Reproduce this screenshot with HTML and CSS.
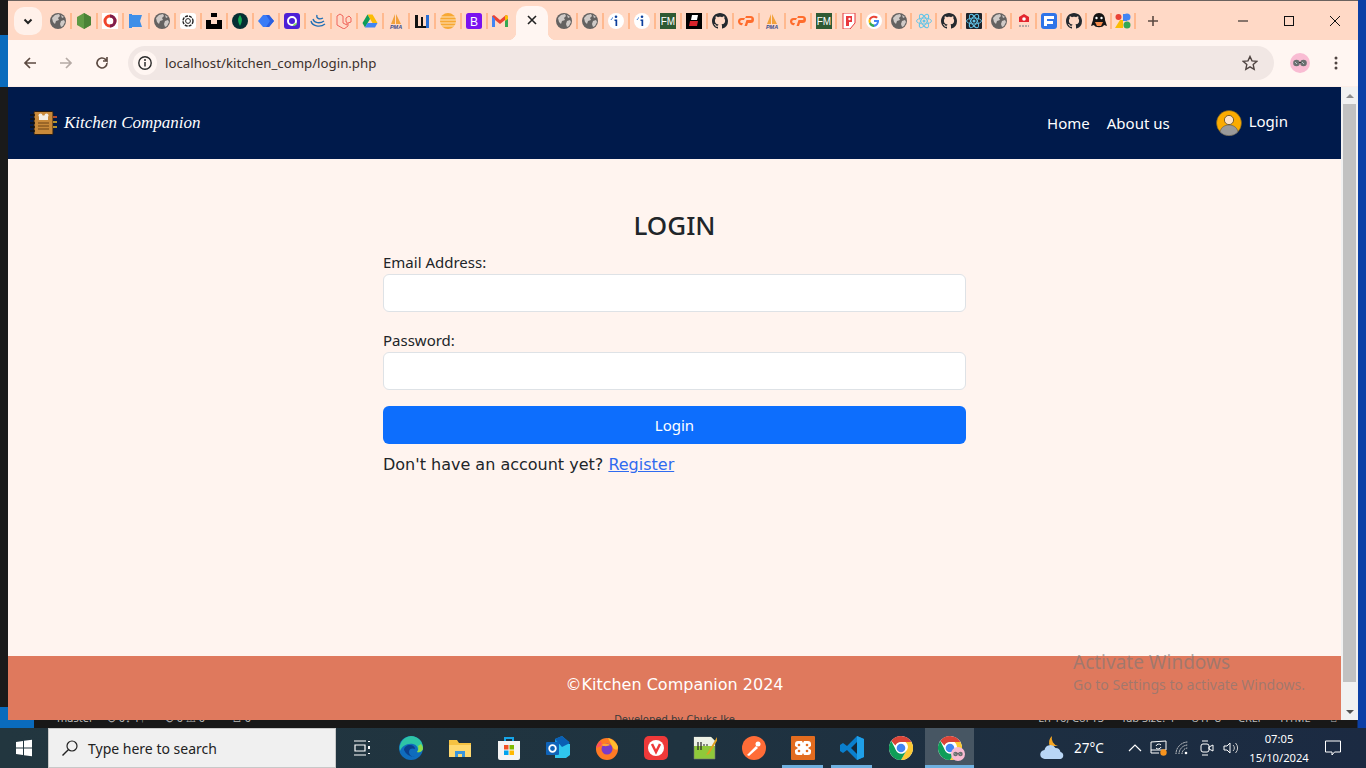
FILE: index.html
```html
<!DOCTYPE html>
<html lang="en">
<head>
<meta charset="utf-8">
<title>Kitchen Companion - Login</title>
<link rel="stylesheet" href="styles.css">
</head>
<body>
<svg class="defs" width="0" height="0" aria-hidden="true">
  <symbol id="globe" viewBox="0 0 16 16"><circle cx="8" cy="8" r="8" fill="#646261"/><path d="M2 5l3-3 4-1 1 2-2 2 1 2-3 1-1 3-2-2zM11 8l3-1 1 2-2 4-2 1-1-3zM11 2l3 2-2 1z" fill="#cfcac7"/></symbol>
  <symbol id="node" viewBox="0 0 16 16"><path d="M8 0l7 4v8l-7 4-7-4V4z" fill="#5f9a44"/><path d="M8 0l7 4v8l-7 4z" fill="#4a8336"/></symbol>
  <symbol id="ring" viewBox="0 0 16 16"><rect width="16" height="16" fill="#fff"/><circle cx="8" cy="8" r="5" fill="none" stroke="#f0452c" stroke-width="3"/><path d="M8 3a5 5 0 0 1 0 10" fill="none" stroke="#7d1e4e" stroke-width="3"/></symbol>
  <symbol id="flag" viewBox="0 0 16 16"><path d="M1 1h3v1h10l-2 6 2 6H4v1H1z" fill="#3f8fe8"/></symbol>
  <symbol id="gpt" viewBox="0 0 16 16"><rect width="16" height="16" rx="3" fill="#fff"/><circle cx="8" cy="8" r="5" fill="none" stroke="#222" stroke-width="1.4" stroke-dasharray="3 1"/><circle cx="8" cy="8" r="2.4" fill="none" stroke="#222"/></symbol>
  <symbol id="unsplash" viewBox="0 0 16 16"><path d="M5 0h6v4H5zM0 7h5v4h6V7h5v9H0z" fill="#000"/></symbol>
  <symbol id="mongo" viewBox="0 0 16 16"><circle cx="8" cy="8" r="8" fill="#052e33"/><path d="M8 2c2 3 3 5 0 11-3-6-2-8 0-11z" fill="#13aa52"/></symbol>
  <symbol id="diamond" viewBox="0 0 16 16"><path d="M5 2h6l5 6-5 6H5L0 8z" fill="#3a7cf7"/><path d="M8 2h3l5 6-5 6H8l4-6z" fill="#2a5fe0"/></symbol>
  <symbol id="purple" viewBox="0 0 16 16"><rect width="16" height="16" rx="3" fill="#4d1fd6"/><circle cx="8" cy="8" r="4" fill="none" stroke="#fff" stroke-width="2"/><path d="M9 13c0-2 2-3 4-3 0 2-2 3-4 3z" fill="#7ed957"/></symbol>
  <symbol id="jq" viewBox="0 0 16 16"><g fill="none" stroke="#1f6fb5" stroke-width="1.3"><path d="M1 8c1 5 9 7 14 3"/><path d="M3 6c1 4 7 5 11 2"/><path d="M7 2C6 5 9 7 13 5"/></g></symbol>
  <symbol id="laravel" viewBox="0 0 16 16"><path d="M1 3l3-2 3 2v7l4 2v-3l-1 0V5l3-2 2 2v4l-3 1v3l-4 3-7-4z" fill="none" stroke="#f0645a" stroke-width="1"/></symbol>
  <symbol id="drive" viewBox="0 0 16 16"><path d="M5.500 1.500h5l5 8.500h-5z" fill="#fbbc04"/><path d="M5.500 1.500L0.500 10l2.500 4.500L8 6z" fill="#0f9d58"/><path d="M3 14.500h10l2.500-4.500h-10z" fill="#4285f4"/></symbol>
  <symbol id="wf" viewBox="0 0 16 16"><path d="M1 2h3v11h3V4h2v9h3V2h3v13H1z" fill="#111"/><path d="M12 2h3v13h-3z" fill="#2a6fd6"/></symbol>
  <symbol id="stripe" viewBox="0 0 16 16"><circle cx="8" cy="8" r="8" fill="#f7a833"/><path d="M0 4h16M0 7h16M0 10h16M0 13h16" stroke="#ffe2bd" stroke-width="1"/></symbol>
  <symbol id="gmail" viewBox="0 0 16 16"><path d="M0 3v11h3V7l5 4 5-4v7h3V3l-2-1-6 5-6-5z" fill="#ea4335"/><path d="M0 3v11h3V6z" fill="#4285f4"/><path d="M13 6v8h3V3z" fill="#34a853"/><path d="M14 2l2 1v3l-3 2V3z" fill="#fbbc04"/></symbol>
  <symbol id="info" viewBox="0 0 16 16"><circle cx="8" cy="8" r="8" fill="#fff"/><circle cx="8" cy="3.800" r="1.300" fill="#0c3f9c"/><path d="M6.500 6.500h2.700v6.500H7.500V8h-1z" fill="#0c3f9c"/><path d="M3 7a6 6 0 0 1 2-2.500" stroke="#3a7ad6" fill="none"/></symbol>
  <symbol id="blk" viewBox="0 0 16 16"><rect width="16" height="16" fill="#000"/><path d="M6 2h6l-1 5H5z" fill="#fff"/><path d="M4 8h8l-1 5H3z" fill="#d8232a"/></symbol>
  <symbol id="gh" viewBox="0 0 16 16"><path fill="#24292f" d="M8 0C3.580 0 0 3.580 0 8c0 3.540 2.290 6.530 5.470 7.590.4.070.55-.170.55-.380 0-.190-.010-.820-.010-1.490-2.010.370-2.530-.490-2.690-.940-.090-.230-.480-.940-.820-1.130-.280-.150-.680-.520-.010-.530.630-.010 1.080.580 1.230.820.720 1.210 1.870.870 2.330.660.070-.520.280-.870.510-1.070-1.780-.200-3.640-.890-3.640-3.950 0-.870.310-1.590.820-2.150-.080-.200-.360-1.020.080-2.120 0 0 .670-.210 2.200.820.640-.180 1.320-.270 2-.270s1.360.090 2 .270c1.530-1.040 2.200-.820 2.200-.820.440 1.100.160 1.920.080 2.120.510.560.820 1.270.820 2.150 0 3.070-1.870 3.750-3.650 3.950.290.250.540.730.540 1.480 0 1.070-.010 1.930-.010 2.200 0 .210.150.460.550.380A8.013 8.013 0 0 0 16 8c0-4.420-3.580-8-8-8z"/></symbol>
  <symbol id="cp" viewBox="0 0 16 16"><path d="M0 8.500A3.500 3.500 0 0 1 3.500 5H7L6 7H3.700a1.500 1.500 0 0 0 0 3H5l-1 2.200A3.600 3.600 0 0 1 0 8.500zM8 3h4.500a3.500 3.500 0 0 1 0 7H10l-1 3H6.500l2-6h4a1 1 0 0 0 0-2H7.200z" fill="#ff6c2c"/></symbol>
  <symbol id="pred" viewBox="0 0 16 16"><path d="M2 0h12v10l-5 6H2z" fill="#fff" stroke="#e8383d"/><path d="M5 3h6v6H8v4H5z" fill="#e8383d"/><circle cx="8.500" cy="6" r="1.200" fill="#fff"/></symbol>
  <symbol id="goog" viewBox="0 0 16 16"><circle cx="8" cy="8" r="8" fill="#fff"/><path d="M13 7H8v2h3a3 3 0 0 1-3 2.500V14a6 6 0 0 0 5-7z" fill="#4285f4"/><path d="M8 11.500A3.500 3.500 0 0 1 4.700 9L3 10.500A6 6 0 0 0 8 14z" fill="#34a853"/><path d="M4.700 9a3.500 3.500 0 0 1 0-2L3 5.500a6 6 0 0 0 0 5z" fill="#fbbc05"/><path d="M4.700 7A3.500 3.500 0 0 1 10.400 5.600l1.500-1.500A6 6 0 0 0 3 5.500z" fill="#ea4335"/></symbol>
  <symbol id="react" viewBox="0 0 16 16"><g fill="none" stroke="#61c4e8" stroke-width=".9"><ellipse cx="8" cy="8" rx="7.500" ry="3"/><ellipse cx="8" cy="8" rx="7.500" ry="3" transform="rotate(60 8 8)"/><ellipse cx="8" cy="8" rx="7.500" ry="3" transform="rotate(120 8 8)"/></g><circle cx="8" cy="8" r="1.500" fill="#61c4e8"/></symbol>
  <symbol id="reactd" viewBox="0 0 16 16"><rect width="16" height="16" rx="1" fill="#20232a"/><use href="#react"/></symbol>
  <symbol id="lonn" viewBox="0 0 16 16"><path d="M8 1l5 3v5H3V4z" fill="#e3262e"/><circle cx="8" cy="6" r="1.800" fill="#fff"/><path d="M3 13h10" stroke="#999" stroke-width="1.500" stroke-dasharray="2 1"/></symbol>
  <symbol id="fblue" viewBox="0 0 16 16"><rect width="16" height="16" rx="3" fill="#2f74e8"/><path d="M3 3h10v3H6v2h6v3H6v2H3z" fill="#fff"/></symbol>
  <symbol id="qq" viewBox="0 0 16 16"><path d="M8 0c4 0 6 3 6 7l2 6-3-1c-1 3-9 3-10 0l-3 1 2-6c0-4 2-7 6-7z" fill="#141414"/><path d="M4 9h8l-2 4H6z" fill="#f58a4b"/><circle cx="5.500" cy="5" r="1.200" fill="#fff"/><circle cx="10.500" cy="5" r="1.200" fill="#fff"/></symbol>
  <symbol id="apps" viewBox="0 0 16 16"><circle cx="3.500" cy="4" r="3" fill="#ea4335"/><path d="M0 15l5-8h3v8z" fill="#fbbc04"/><path d="M8 1h4v7H8z" fill="#4285f4"/><circle cx="12" cy="4" r="3.500" fill="#4285f4"/><circle cx="12" cy="12" r="3.500" fill="#34a853"/></symbol>
  <symbol id="chrome" viewBox="0 0 24 24"><circle cx="12" cy="12" r="12" fill="#fff"/><path d="M12 0a12 12 0 0 1 10.400 6H12a6 6 0 0 0-5.600 3.600L2.300 5A12 12 0 0 1 12 0z" fill="#db4437"/><path d="M22.400 6A12 12 0 0 1 12 24l5.200-9a6 6 0 0 0-.7-9z" fill="#fcc934"/><path d="M12 24A12 12 0 0 1 2.300 5l4.900 9.600A6 6 0 0 0 17.200 15z" fill="#0f9d58"/><circle cx="12" cy="12" r="5.500" fill="#fff"/><circle cx="12" cy="12" r="4.300" fill="#4285f4"/></symbol>
  <symbol id="shades" viewBox="0 0 20 20"><circle cx="10" cy="10" r="10" fill="#f9bcd3"/><circle cx="6.500" cy="10" r="3.300" fill="#6a6f70"/><circle cx="13.500" cy="10" r="3.300" fill="#6a6f70"/><path d="M9 9.500h2" stroke="#333"/><path d="M5 9l2 2M12 9l2 2" stroke="#cdd" stroke-width=".8"/></symbol>
</svg>

<div class="screen">
  <div class="desktop">
    <div class="activity-mark"></div>
    <div class="statusbar">
      <div class="status-left">
        <span class="status-remote"></span>
        <span class="st st-master">master</span>
        <span class="st st-sync">⊙ 0↓ 1↑</span>
        <span class="st st-err">⊘ 0 ⚠ 0</span>
        <span class="st st-port">♙ 0</span>
      </div>
      <div class="status-right">
        <span class="st">Ln 16, Col 13</span>
        <span class="st">Tab Size: 4</span>
        <span class="st">UTF-8</span>
        <span class="st">CRLF</span>
        <span class="st">HTML</span>
        <span class="st st-bell">⌂</span>
      </div>
    </div>

    <div class="window">
      <div class="tabstrip">
        <button class="tab-search" type="button" aria-label="Search tabs">
          <svg width="12" height="12" viewBox="0 0 12 12"><path d="M2.500 4.500L6 8l3.500-3.500" fill="none" stroke="#222" stroke-width="2"/></svg>
        </button>
        <div class="tabs tabs-a">
          <span class="tab first"><svg class="fav"><use href="#globe"/></svg></span>
          <span class="tab"><svg class="fav"><use href="#node"/></svg></span>
          <span class="tab"><svg class="fav"><use href="#ring"/></svg></span>
          <span class="tab"><svg class="fav"><use href="#flag"/></svg></span>
          <span class="tab"><svg class="fav"><use href="#globe"/></svg></span>
          <span class="tab"><svg class="fav"><use href="#gpt"/></svg></span>
          <span class="tab"><svg class="fav"><use href="#unsplash"/></svg></span>
          <span class="tab"><svg class="fav"><use href="#mongo"/></svg></span>
          <span class="tab"><svg class="fav"><use href="#diamond"/></svg></span>
          <span class="tab"><svg class="fav"><use href="#purple"/></svg></span>
          <span class="tab"><svg class="fav"><use href="#jq"/></svg></span>
          <span class="tab"><svg class="fav"><use href="#laravel"/></svg></span>
          <span class="tab"><svg class="fav"><use href="#drive"/></svg></span>
          <span class="tab"><svg class="fav" viewBox="0 0 16 16"><path d="M3 11l4-10v10zM8 11l0-10 5 10z" fill="#f2a13b"/><text x="8" y="15.500" class="fav-pma">PMA</text></svg></span>
          <span class="tab"><svg class="fav"><use href="#wf"/></svg></span>
          <span class="tab"><svg class="fav"><use href="#stripe"/></svg></span>
          <span class="tab"><svg class="fav" viewBox="0 0 16 16"><rect width="16" height="16" rx="2.500" fill="#7a12f0"/><text x="8" y="12.500" class="fav-b">B</text></svg></span>
          <span class="tab"><svg class="fav"><use href="#gmail"/></svg></span>
        </div>
        <div class="tab-active">
          <svg width="12" height="12" viewBox="0 0 12 12"><path d="M2 2l8 8M10 2l-8 8" stroke="#222" stroke-width="1.600"/></svg>
        </div>
        <div class="tabs tabs-b">
          <span class="tab first"><svg class="fav"><use href="#globe"/></svg></span>
          <span class="tab"><svg class="fav"><use href="#globe"/></svg></span>
          <span class="tab"><svg class="fav"><use href="#info"/></svg></span>
          <span class="tab"><svg class="fav"><use href="#info"/></svg></span>
          <span class="tab"><svg class="fav" viewBox="0 0 16 16"><rect width="16" height="16" fill="#2f5a33"/><text x="8" y="12" class="fav-fm">FM</text></svg></span>
          <span class="tab"><svg class="fav"><use href="#blk"/></svg></span>
          <span class="tab"><svg class="fav"><use href="#gh"/></svg></span>
          <span class="tab"><svg class="fav"><use href="#cp"/></svg></span>
          <span class="tab"><svg class="fav" viewBox="0 0 16 16"><path d="M3 11l4-10v10zM8 11l0-10 5 10z" fill="#f2a13b"/><text x="8" y="15.500" class="fav-pma">PMA</text></svg></span>
          <span class="tab"><svg class="fav"><use href="#cp"/></svg></span>
          <span class="tab"><svg class="fav" viewBox="0 0 16 16"><rect width="16" height="16" fill="#2f5a33"/><text x="8" y="12" class="fav-fm">FM</text></svg></span>
        </div>
        <div class="tabs tabs-c">
          <span class="tab"><svg class="fav"><use href="#pred"/></svg></span>
          <span class="tab"><svg class="fav"><use href="#goog"/></svg></span>
          <span class="tab"><svg class="fav"><use href="#globe"/></svg></span>
          <span class="tab"><svg class="fav"><use href="#react"/></svg></span>
          <span class="tab"><svg class="fav"><use href="#gh"/></svg></span>
          <span class="tab"><svg class="fav"><use href="#reactd"/></svg></span>
          <span class="tab"><svg class="fav"><use href="#globe"/></svg></span>
          <span class="tab"><svg class="fav"><use href="#lonn"/></svg></span>
          <span class="tab"><svg class="fav"><use href="#fblue"/></svg></span>
          <span class="tab"><svg class="fav"><use href="#gh"/></svg></span>
          <span class="tab"><svg class="fav"><use href="#qq"/></svg></span>
          <span class="tab last"><svg class="fav"><use href="#apps"/></svg></span>
        </div>
        <svg class="newtab" width="12" height="12" viewBox="0 0 12 12"><path d="M6 1v10M1 6h10" stroke="#5c4a42" stroke-width="1.600"/></svg>
        <div class="winctrls">
          <span class="winbtn"><svg width="12" height="12" viewBox="0 0 12 12"><path d="M1 6h10" stroke="#111"/></svg></span>
          <span class="winbtn"><svg width="12" height="12" viewBox="0 0 12 12"><rect x="1.500" y="1.500" width="9" height="9" fill="none" stroke="#111"/></svg></span>
          <span class="winbtn"><svg width="12" height="12" viewBox="0 0 12 12"><path d="M1 1l10 10M11 1L1 11" stroke="#111"/></svg></span>
        </div>
      </div>

      <div class="toolbar">
        <span class="tool"><svg width="16" height="16" viewBox="0 0 16 16"><path d="M14 8H3M8 3L3 8l5 5" fill="none" stroke="#5c4a42" stroke-width="1.700"/></svg></span>
        <span class="tool"><svg width="16" height="16" viewBox="0 0 16 16"><path d="M2 8h11M8 3l5 5-5 5" fill="none" stroke="#b5aaa5" stroke-width="1.700"/></svg></span>
        <span class="tool"><svg width="16" height="16" viewBox="0 0 16 16"><path d="M13 8a5 5 0 1 1-1.500-3.600L13 6V2M13 6H9" fill="none" stroke="#5c4a42" stroke-width="1.600"/></svg></span>
        <div class="omnibox">
          <span class="site-info"><svg width="16" height="16" viewBox="0 0 16 16"><circle cx="8" cy="8" r="6.200" fill="none" stroke="#2b2b2b" stroke-width="1.400"/><path d="M8 7v4.500" stroke="#2b2b2b" stroke-width="1.500"/><circle cx="8" cy="5" r="1" fill="#2b2b2b"/></svg></span>
          <span class="url">localhost/kitchen_comp/login.php</span>
          <svg class="star" width="16" height="16" viewBox="0 0 16 16"><path d="M8 1.500l2 4.400 4.700.5-3.500 3.200 1 4.700L8 11.900l-4.200 2.400 1-4.700L1.300 6.400 6 5.900z" fill="none" stroke="#4f4441" stroke-width="1.400"/></svg>
        </div>
        <svg class="avatar" width="20" height="20"><use href="#shades"/></svg>
        <svg class="kebab" width="4" height="14" viewBox="0 0 4 14"><circle cx="2" cy="2" r="1.500" fill="#4f4441"/><circle cx="2" cy="7" r="1.500" fill="#4f4441"/><circle cx="2" cy="12" r="1.500" fill="#4f4441"/></svg>
      </div>

      <div class="viewport">
        <div class="page">
          <nav class="navbar">
            <a class="brand" href="#">
              <svg class="brand-icon" width="27" height="24" viewBox="0 0 27 24">
                <rect x="4" y="0.500" width="19" height="23" rx="1" fill="#c98a3a" stroke="#2a1c10"/>
                <path d="M9 4.500h9v4.500H9z" fill="#f4efe6"/>
                <circle cx="10.500" cy="4.500" r="2" fill="#f4efe6"/><circle cx="16.500" cy="4.500" r="2" fill="#f4efe6"/>
                <path d="M8 12h11M8 15h11M8 18h11" stroke="#6d4317"/>
                <path d="M0 4h5M0 8h5M0 12h5M0 16h5M0 20h5" stroke="#111" stroke-width="1.600"/>
                <path d="M23 6h4" stroke="#e05a2a" stroke-width="1.600"/><path d="M23 11h4" stroke="#e0b02a" stroke-width="1.600"/><path d="M23 16h4" stroke="#e0b02a" stroke-width="1.600"/>
              </svg>
              <span class="brand-text">Kitchen Companion</span>
            </a>
            <div class="nav-links">
              <a class="nav-link" href="#">Home</a>
              <a class="nav-link" href="#">About us</a>
              <a class="nav-login" href="#">
                <svg width="26" height="26" viewBox="0 0 26 26">
                  <circle cx="13" cy="13" r="12.500" fill="#fbab00" stroke="#6b5a2a" stroke-width=".6"/>
                  <path d="M4 22c1-5 5-7 9-7s8 2 9 7a12.500 12.500 0 0 1-18 0z" fill="#9a9a9a" stroke="#555" stroke-width=".6"/>
                  <circle cx="13" cy="10" r="4.600" fill="#fde3c8" stroke="#5b4420" stroke-width=".8"/>
                </svg>
                <span class="nav-login-text">Login</span>
              </a>
            </div>
          </nav>

          <main class="main">
            <form class="login-form">
              <h1 class="login-title">LOGIN</h1>
              <label class="field-label" for="email">Email Address:</label>
              <input class="field-input" id="email" type="email">
              <label class="field-label field-gap" for="password">Password:</label>
              <input class="field-input" id="password" type="password">
              <button class="submit" type="button">Login</button>
              <p class="register">Don't have an account yet? <a href="#">Register</a></p>
            </form>
          </main>

          <footer class="footer">
            <p class="copyright">©Kitchen Companion 2024</p>
            <p class="credit">Developed by Chuks Ike</p>
          </footer>
        </div>
        <div class="scrollbar">
          <span class="sb-btn"><i class="arrow-up"></i></span>
          <span class="sb-thumb"></span>
          <span class="sb-track"></span>
          <span class="sb-btn"><i class="arrow-down"></i></span>
        </div>
      </div>
    </div>

    <div class="activate">
      <div class="activate-title">Activate Windows</div>
      <div class="activate-sub">Go to Settings to activate Windows.</div>
    </div>
  </div>

  <div class="taskbar">
    <span class="start"><svg width="18" height="18" viewBox="0 0 18 18"><path d="M1 3l7-1v6.500H1zM9 1.800L17 .700v7.800H9zM1 9.500h7V16l-7-1zM9 9.500h8v7.800l-8-1.100z" fill="#fff"/></svg></span>
    <div class="searchbox">
      <svg width="18" height="18" viewBox="0 0 18 18"><circle cx="11" cy="7" r="5" fill="none" stroke="#222" stroke-width="1.200"/><path d="M7.300 10.700L1.500 16.500" stroke="#222" stroke-width="1.400"/></svg>
      <span class="search-text">Type here to search</span>
    </div>
    <div class="task-icons">
      <span class="task"><svg width="16" height="16" viewBox="0 0 16 16"><path d="M0 1h12M0 15h12M1 5h10v6H1z" fill="none" stroke="#fff" stroke-width="1.200"/><path d="M14 1h2v1h-2zM14 6h2v3h-2zM14 13h2v1h-2z" fill="#fff"/></svg></span>
      <span class="task"><svg width="24" height="24" viewBox="0 0 24 24"><circle cx="12" cy="12" r="12" fill="#0f6cbd"/><path d="M12 0a12 12 0 0 1 12 12c0 3-3 5-6 4 2-2 1-7-4-8C8 7 3 10 1 15A12 12 0 0 1 12 0z" fill="#2ec4a6"/><path d="M22 8a12 12 0 0 1 2 4c0 3-3 5-6 4 1-1 2-4 1-6z" fill="#8fdc4a"/><path d="M5 14c0-3 3-5 6-5 3 0 5 2 5 4-2-1-6-1-6 3 0 3 3 5 6 5a12 12 0 0 1-11-7z" fill="#0a3f8c"/></svg></span>
      <span class="task"><svg width="24" height="20" viewBox="0 0 24 20"><path d="M1 2h8l2 3h12v14H1z" fill="#f5c242"/><path d="M1 7h22v12H1z" fill="#ffd970"/><path d="M7 13h10v6H7z" fill="#3a96dd"/><path d="M10 16h4v3h-4z" fill="#ffd970"/></svg></span>
      <span class="task"><svg width="24" height="24" viewBox="0 0 24 24"><path d="M8 6V2h8v4" fill="none" stroke="#16a5e8" stroke-width="2"/><path d="M1 5h22v17a2 2 0 0 1-2 2H3a2 2 0 0 1-2-2z" fill="#f4f4f4"/><rect x="7" y="9" width="4.500" height="4.500" fill="#f25022"/><rect x="12.500" y="9" width="4.500" height="4.500" fill="#7fba00"/><rect x="7" y="14.500" width="4.500" height="4.500" fill="#00a4ef"/><rect x="12.500" y="14.500" width="4.500" height="4.500" fill="#ffb900"/></svg></span>
      <span class="task"><svg width="24" height="24" viewBox="0 0 24 24"><path d="M9 3l7-3 7 6v13l-4 3H9z" fill="#1490df"/><path d="M9 8h15v11l-4 3H9z" fill="#2fc6ee"/><path d="M9 3l7-3 8 7-8 4z" fill="#0a5fb4"/><rect x="0" y="6" width="13" height="13" rx="1" fill="#0f63b8"/><circle cx="6.500" cy="12.500" r="3.300" fill="none" stroke="#fff" stroke-width="1.800"/></svg></span>
      <span class="task"><svg width="24" height="24" viewBox="0 0 24 24"><circle cx="12" cy="13" r="11" fill="#ff7a24"/><path d="M13 2c4 1 9 5 10 9 0 4-3 3-5 1z" fill="#ffbd2e"/><path d="M1 12c1-4 3-6 5-7 0 3 2 3 3 4z" fill="#ff4f5e"/><circle cx="12" cy="13" r="5.500" fill="#7a3bc7"/><path d="M6 9c2-1 6-2 9 0-2 1-5 2-9 0z" fill="#ffa436"/></svg></span>
      <span class="task"><svg width="24" height="24" viewBox="0 0 24 24"><rect width="24" height="24" rx="5" fill="#ef3939"/><circle cx="12" cy="12" r="8" fill="#fff"/><path d="M8 8l4 8 4-8" fill="none" stroke="#ef3939" stroke-width="2.500"/></svg></span>
      <span class="task"><svg width="24" height="24" viewBox="0 0 24 24"><path d="M1 1h17l4 4v18H1z" fill="#8fc93a" stroke="#777" stroke-width=".6"/><path d="M1 1h17l4 4v5H1z" fill="#eef2e6"/><path d="M5 6v8M8 6v8" stroke="#222" stroke-width="1.200"/><path d="M10 9h5" stroke="#222" stroke-dasharray="2 1"/><path d="M24 1l-9 15-2 3 3-1 9-15z" fill="#e0a020"/></svg></span>
      <span class="task"><svg width="24" height="24" viewBox="0 0 24 24"><circle cx="12" cy="12" r="12" fill="#ff6c37"/><path d="M5 19l9-9 2 2-9 8z" fill="#fff"/><circle cx="16" cy="8" r="2.500" fill="#fff"/></svg></span>
      <span class="task running"><svg width="24" height="24" viewBox="0 0 24 24"><rect width="24" height="24" rx="1" fill="#e36c1f"/><path d="M7 5h4l1 2 1-2h4a3 3 0 0 1 3 3v2l-3 2 3 2v2a3 3 0 0 1-3 3h-4l-1-2-1 2H7a3 3 0 0 1-3-3v-2l3-2-3-2V8a3 3 0 0 1 3-3z" fill="#fff"/><circle cx="8" cy="9" r="1.300" fill="#e36c1f"/><circle cx="16" cy="9" r="1.300" fill="#e36c1f"/><circle cx="8" cy="15" r="1.300" fill="#e36c1f"/><circle cx="16" cy="15" r="1.300" fill="#e36c1f"/></svg></span>
      <span class="task running"><svg width="24" height="24" viewBox="0 0 24 24"><path d="M17 0l7 3v18l-7 3L7 14l-4 3-3-2v-6l3-2 4 3z" fill="#0a7fce"/><path d="M17 0l7 3v18l-7 3z" fill="#1f9fe8"/><path d="M17 6v12l-6-6z" fill="#14283a"/></svg></span>
      <span class="task"><svg width="24" height="24"><use href="#chrome"/></svg></span>
      <span class="task active"><svg width="24" height="24"><use href="#chrome"/></svg><svg class="task-badge" width="14" height="14"><use href="#shades"/></svg></span>
    </div>
    <div class="tray">
      <svg class="weather" width="26" height="26" viewBox="0 0 26 26"><path d="M12 1a8 8 0 0 0-2 10l8 0a8 8 0 0 1-6-10z" fill="#f5a623"/><path d="M5 24a4.500 4.500 0 0 1-.500-9 6 6 0 0 1 11-2 5 5 0 0 1 5 4 3.600 3.600 0 0 1 0 7z" fill="#b9d6f5"/></svg>
      <span class="temp">27°C</span>
      <span class="tray-icon"><svg width="14" height="8" viewBox="0 0 14 8"><path d="M1 7l6-6 6 6" fill="none" stroke="#fff" stroke-width="1.200"/></svg></span>
      <span class="tray-icon"><svg width="18" height="16" viewBox="0 0 18 16"><path d="M1 2l15-1v9H1zM1 10v3h8" fill="none" stroke="#fff"/><path d="M6 6a3 3 0 0 1 5-1M11 7a3 3 0 0 1-5 1" fill="none" stroke="#fff"/><circle cx="13.500" cy="12.500" r="3.200" fill="#f7931e"/></svg></span>
      <span class="tray-icon"><svg width="16" height="14" viewBox="0 0 16 14"><path d="M1 13a12 12 0 0 1 12-12M4 13a9 9 0 0 1 9-9M7 13a6 6 0 0 1 6-6" fill="none" stroke="#ddd" stroke-dasharray="1.500 .8"/><circle cx="11" cy="12" r="1.300" fill="#fff"/></svg></span>
      <span class="tray-icon"><svg width="14" height="16" viewBox="0 0 14 16"><rect x="1" y="4" width="8" height="8" rx="2" fill="none" stroke="#fff"/><path d="M9 7l4-2v6l-4-2z" fill="none" stroke="#fff"/><path d="M2 1h6M2 15h6" stroke="#fff"/></svg></span>
      <span class="tray-icon"><svg width="16" height="14" viewBox="0 0 16 14"><path d="M1 5h3l3-3v10L4 9H1z" fill="none" stroke="#fff"/><path d="M10 4a4 4 0 0 1 0 6M12.500 2a7 7 0 0 1 0 10" fill="none" stroke="#ccc"/></svg></span>
      <div class="clock"><span>07:05</span><span>15/10/2024</span></div>
      <span class="notify"><svg width="16" height="16" viewBox="0 0 16 16"><path d="M.5 1h15v11h-6L7 15v-3H.5z" fill="none" stroke="#fff"/></svg></span>
    </div>
  </div>
</div>
</body>
</html>
```

FILE: styles.css
```css
* { box-sizing: border-box; }
html, body { margin: 0; padding: 0; height: 100%; overflow: hidden; }
body { font-family: "Noto Sans", "Open Sans", sans-serif; color: #212529; background: #111; }
.defs { position: absolute; }

.screen { display: flex; flex-direction: column; width: 1366px; height: 768px; }
.desktop { position: relative; height: 728px; background: linear-gradient(90deg, #1a1a1a 0, #1a1a1a 1357px, #0b3fa6 1358px); overflow: hidden; }
.activity-mark { position: absolute; left: 0; top: 35px; width: 8px; height: 52px; background: #0a6bbd; }

/* VS Code status bar behind the browser window */
.statusbar { position: absolute; left: 0; right: 9px; top: 707px; height: 21px; background: #181818; display: flex; justify-content: space-between; font-family: "Noto Sans", sans-serif; font-size: 11px; line-height: 21px; color: #b8b8b8; }
.status-left { display: flex; }
.status-remote { width: 34px; height: 21px; background: #0a6bbd; margin-right: 23px; }
.st-master { width: 50px; }
.st-sync { width: 58px; }
.st-err { width: 67px; }
.status-right { display: flex; gap: 17px; padding-right: 20px; }
.st { white-space: nowrap; }
.st-bell { margin-left: 3px; }

.window { position: absolute; left: 8px; top: 0; width: 1350px; height: 720px; display: flex; flex-direction: column; background: #fff6f2; }

.tabstrip { height: 40px; flex: none; display: flex; align-items: center; background: #ffd9c6; border-top: 1px solid #6b625e; }
.tab-search { width: 28px; height: 28px; margin-left: 6px; border: 0; padding: 0; border-radius: 10px; background: #fff1ea; display: flex; align-items: center; justify-content: center; }
.tabs { display: flex; align-items: center; }
.tabs-a { margin-left: 2px; }
.tabs-b { margin-left: 2px; }
.tabs-c { margin-left: -1px; }
.tab { width: 26px; height: 16px; display: flex; align-items: center; justify-content: center; border-left: 2px solid #ffb98f; }
.tab.first { border-left-color: transparent; }
.tabs-c .tab { width: 25px; }
.tabs-c .tab.last { border-right: 2px solid #ffb98f; width: 26px; }
.fav { width: 16px; height: 16px; flex: none; }
.fav-pma { font-family: "Liberation Sans", sans-serif; font-size: 5.5px; font-style: italic; font-weight: 700; fill: #3a4a8a; text-anchor: middle; }
.fav-b { font-family: "Liberation Sans", sans-serif; font-size: 12px; fill: #fff; text-anchor: middle; }
.fav-fm { font-family: "Liberation Sans", sans-serif; font-size: 10px; fill: #fff; text-anchor: middle; }
.tab-active { position: relative; width: 32px; height: 34px; margin: 5px 0 0 4px; align-self: flex-end; background: #fff6f2; border-radius: 10px 10px 0 0; display: flex; align-items: center; justify-content: center; padding-bottom: 6px; }
.tab-active::before, .tab-active::after { content: ""; position: absolute; bottom: 0; width: 8px; height: 8px; }
.tab-active::before { left: -8px; background: radial-gradient(circle at 0 0, transparent 8px, #fff6f2 8.5px); }
.tab-active::after { right: -8px; background: radial-gradient(circle at 100% 0, transparent 8px, #fff6f2 8.5px); }
.newtab { margin-left: 11px; }
.winctrls { margin-left: auto; display: flex; }
.winbtn { width: 46px; height: 32px; display: flex; align-items: center; justify-content: center; }

.toolbar { height: 47px; flex: none; display: flex; align-items: center; background: #fff6f2; border-bottom: 1px solid #fdeee8; border-radius: 8px 8px 0 0; padding-left: 4px; }
.tool { width: 36px; height: 32px; display: flex; align-items: center; justify-content: center; }
.omnibox { width: 1146px; height: 34px; margin-left: 8px; background: #f1e7e4; border-radius: 17px; display: flex; align-items: center; padding-left: 5px; }
.site-info { width: 24px; height: 24px; background: #fff6f2; border-radius: 50%; display: flex; align-items: center; justify-content: center; }
.url { margin-left: 8px; font-size: 13.25px; color: #3b2f2b; white-space: nowrap; }
.star { margin-left: auto; margin-right: 16px; }
.avatar { margin-left: 16px; }
.kebab { margin-left: 24px; }

.viewport { flex: 1; min-height: 0; display: flex; }
.page { flex: 1; min-width: 0; display: flex; flex-direction: column; overflow: hidden; }
.navbar { height: 72px; flex: none; display: flex; align-items: center; justify-content: space-between; background: #001a4b; padding: 0 53px 0 22px; }
.brand { display: flex; align-items: center; gap: 7px; color: #fff; text-decoration: none; }
.brand-text { font-family: "Liberation Serif", serif; font-style: italic; font-size: 17px; color: #fff; white-space: nowrap; }
.nav-links { display: flex; align-items: center; }
.nav-link { color: #fff; text-decoration: none; font-size: 15px; margin-right: 17px; white-space: nowrap; }
.nav-login { display: flex; align-items: center; gap: 7px; margin-left: 29px; color: #fff; text-decoration: none; font-size: 15px; }
.nav-login-text { position: relative; top: -2px; }

.main { flex: 1; min-height: 0; background: #fff4ef; display: flex; justify-content: center; }
.login-form { width: 583px; display: flex; flex-direction: column; padding-top: 49px; }
.login-title { margin: 0 0 9px; font-size: 26px; line-height: 34px; font-weight: 500; text-align: center; color: #212529; }
.field-label { font-size: 15px; line-height: 22px; margin-bottom: 1px; color: #212529; }
.field-gap { margin-top: 17px; }
.field-input { height: 38px; width: 100%; background: #fff; border: 1px solid #dee2e6; border-radius: 6px; padding: 6px 12px; }
.submit { height: 38px; margin-top: 16px; border: 0; border-radius: 6px; background: #0d6efd; color: #fff; font-family: inherit; font-size: 15px; }
.register { margin: 9px 0 0; font-family: "DejaVu Sans", sans-serif; font-size: 16px; line-height: 24px; color: #212529; white-space: nowrap; }
.register a { color: #2f6bf0; }

.footer { height: 64px; flex: none; overflow: hidden; background: #df795d; text-align: center; padding-top: 17px; }
.copyright { margin: 0; font-family: "DejaVu Sans", sans-serif; font-size: 16px; line-height: 24px; color: #fff; }
.credit { margin: 15px 0 0; font-family: "DejaVu Sans", sans-serif; font-size: 10px; line-height: 16px; color: #3a3a3a; }

.scrollbar { width: 17px; flex: none; display: flex; flex-direction: column; background: #f1f1f1; }
.sb-btn { height: 17px; flex: none; display: flex; align-items: center; justify-content: center; }
.sb-thumb { height: 578px; flex: none; margin: 0 2px; background: #c1c1c1; }
.sb-track { flex: 1; }
.arrow-up { border: 4px solid transparent; border-top: 0; border-bottom: 4px solid #8c8c8c; }
.arrow-down { border: 4px solid transparent; border-bottom: 0; border-top: 4px solid #505050; }

.activate { position: absolute; left: 1073px; top: 650px; color: rgba(120, 120, 120, .6); white-space: nowrap; }
.activate-title { font-size: 19px; line-height: 25px; }
.activate-sub { font-size: 14px; line-height: 20px; }

.taskbar { height: 40px; flex: none; display: flex; align-items: center; background: linear-gradient(90deg, #22363f 0, #1f3340 50%, #1b2a42 100%); }
.start { width: 48px; height: 40px; display: flex; align-items: center; justify-content: center; }
.searchbox { width: 288px; height: 40px; display: flex; align-items: center; gap: 9px; padding-left: 12px; background: #f0f0f0; border: 1px solid #c8c8c8; }
.search-text { font-size: 14px; color: #222; white-space: nowrap; }
.task-icons { display: flex; margin-left: 1px; }
.task { position: relative; width: 49px; height: 40px; display: flex; align-items: center; justify-content: center; }
.task.running::after, .task.active::after { content: ""; position: absolute; bottom: 0; left: 4px; right: 4px; height: 3px; background: #6fb0e0; }
.task.active { background: #475663; }
.task.active::after { left: 0; right: 0; }
.task-badge { position: absolute; left: 26px; top: 19px; }
.tray { margin-left: auto; display: flex; align-items: center; height: 40px; color: #fff; padding-right: 9px; }
.temp { margin-left: 8px; width: 49px; font-size: 13.5px; white-space: nowrap; }
.tray-icon { width: 24px; height: 40px; display: flex; align-items: center; justify-content: center; }
.clock { width: 60px; margin-left: 6px; display: flex; flex-direction: column; align-items: center; font-size: 11.2px; line-height: 19px; white-space: nowrap; }
.notify { width: 48px; display: flex; justify-content: center; }
```
